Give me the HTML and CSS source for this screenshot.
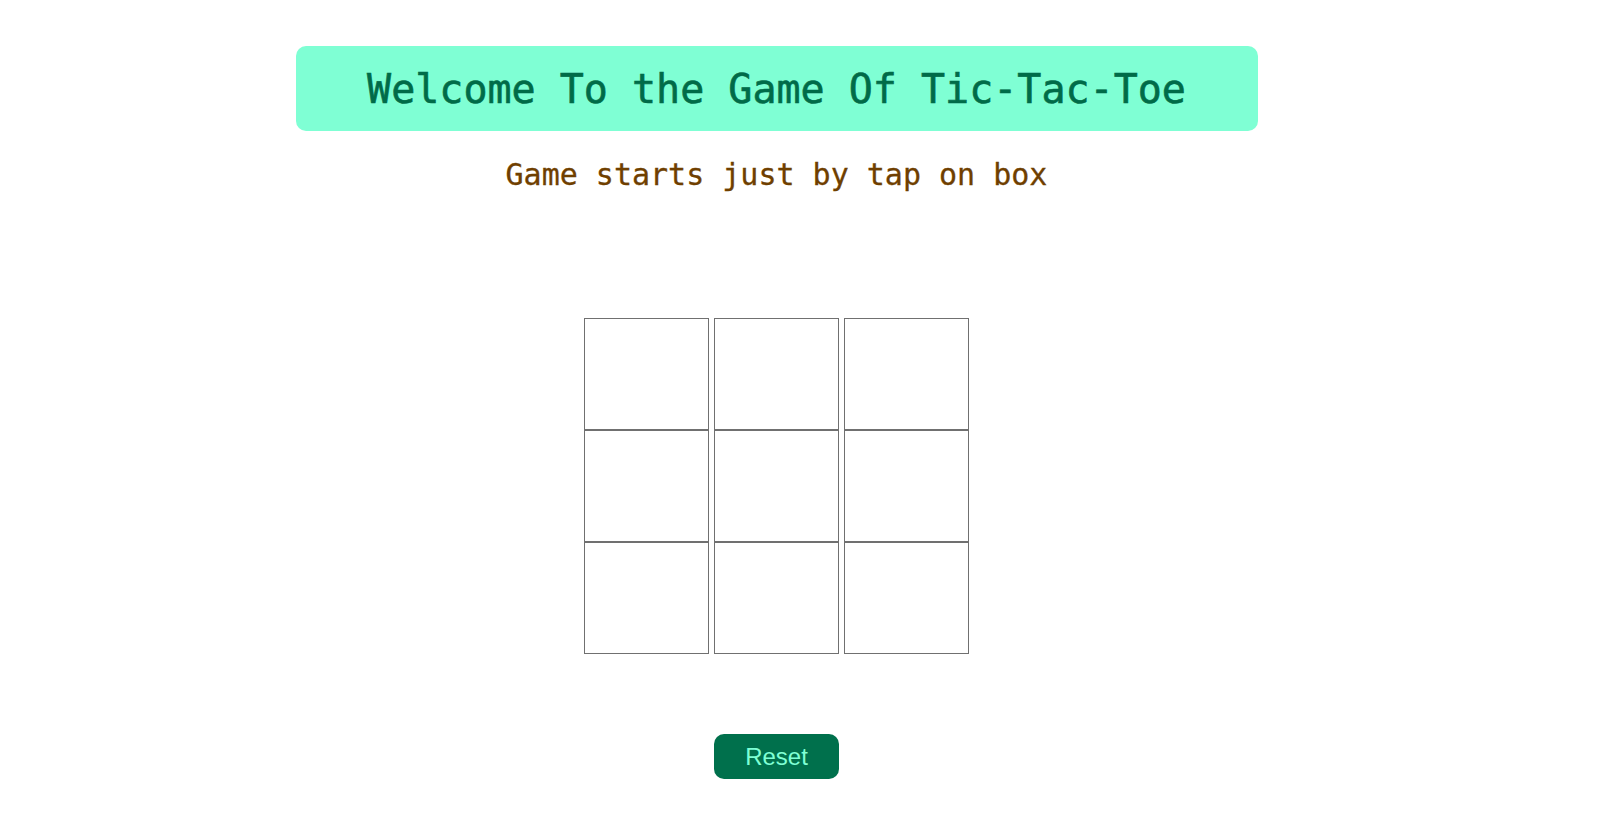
FILE: index.html
```html
<!DOCTYPE html>
<html lang="en">
<head>
<meta charset="utf-8">
<title>Tic-Tac-Toe</title>
<link rel="stylesheet" href="styles.css">
</head>
<body>
<main class="page">
  <h1 class="title">Welcome To the Game Of Tic-Tac-Toe</h1>
  <p class="subtitle">Game starts just by tap on box</p>
  <div class="board">
    <div class="row">
      <button class="cell"></button>
      <button class="cell"></button>
      <button class="cell"></button>
    </div>
    <div class="row">
      <button class="cell"></button>
      <button class="cell"></button>
      <button class="cell"></button>
    </div>
    <div class="row">
      <button class="cell"></button>
      <button class="cell"></button>
      <button class="cell"></button>
    </div>
  </div>
  <button class="reset">Reset</button>
</main>
</body>
</html>
```

FILE: styles.css
```css
body {
  margin: 8px;
  background: #ffffff;
}

.page {
  width: 1537px;
  display: flex;
  flex-direction: column;
  align-items: center;
}

.title {
  margin: 38px 0 0 0;
  width: 962px;
  height: 85px;
  display: flex;
  align-items: center;
  justify-content: center;
  background: #7fffd4;
  color: #006b48;
  border-radius: 10px;
  font-family: "DejaVu Sans Mono", "Liberation Mono", monospace;
  font-size: 40px;
  font-weight: normal;
  -webkit-text-stroke: 0.6px #006b48;
}

.subtitle {
  margin: 26px 0 0 0;
  font-family: "DejaVu Sans Mono", "Liberation Mono", monospace;
  font-size: 30px;
  line-height: 36px;
  color: #6f3f00;
  -webkit-text-stroke: 0.3px #6f3f00;
}

.board {
  margin-top: 125px;
  display: flex;
  flex-direction: column;
}

.row {
  display: flex;
  column-gap: 5px;
}

.cell {
  width: 125px;
  height: 112px;
  margin: 0;
  padding: 0;
  background: #ffffff;
  border: 1px solid #707070;
  box-sizing: border-box;
}

.reset {
  margin-top: 80px;
  width: 125px;
  height: 45px;
  background: #00704c;
  color: #7fffd4;
  border: none;
  border-radius: 10px;
  font-family: "Liberation Sans", Arial, sans-serif;
  font-size: 24px;
  cursor: pointer;
}
```
